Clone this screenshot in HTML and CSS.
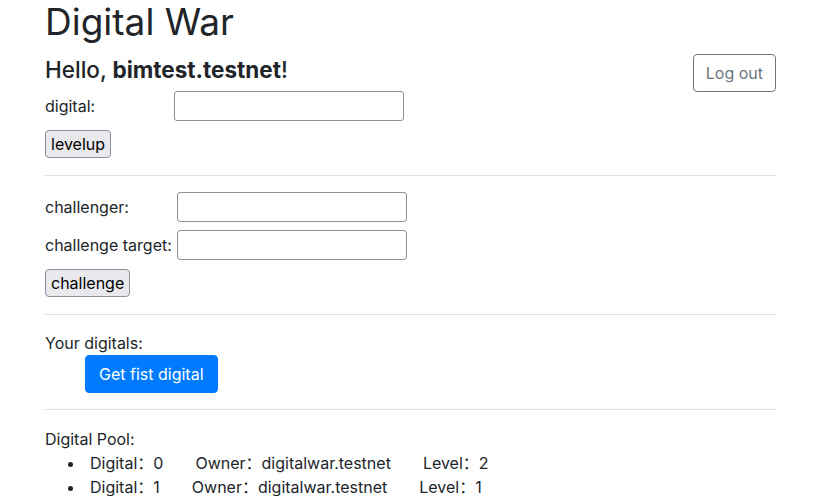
FILE: index.html
```html
<!DOCTYPE html>
<html lang="en">
<head>
<meta charset="utf-8">
<title>Digital War</title>
<link rel="stylesheet" href="styles.css">
</head>
<body>
<main class="container">
  <h1 class="title">Digital War</h1>
  <div class="hello-row">
    <h5 class="hello">Hello, <strong>bimtest.testnet</strong>!</h5>
    <button class="btn-logout" type="button">Log out</button>
  </div>

  <form class="form">
    <div class="field">
      <label class="label label-digital" for="digital">digital:</label>
      <input class="input" id="digital" type="text">
    </div>
    <button class="btn-plain" type="button">levelup</button>
  </form>

  <hr class="divider">

  <form class="form form-gap">
    <div class="field">
      <label class="label label-challenge" for="challenger">challenger:</label>
      <input class="input" id="challenger" type="text">
    </div>
    <div class="field">
      <label class="label label-challenge" for="target">challenge target:</label>
      <input class="input" id="target" type="text">
    </div>
    <button class="btn-plain" type="button">challenge</button>
  </form>

  <hr class="divider">

  <p class="section-title">Your digitals:</p>
  <ul class="plain-list">
    <li><button class="btn-primary" type="button">Get fist digital</button></li>
  </ul>

  <hr class="divider divider-tight">

  <p class="section-title">Digital Pool:</p>
  <ul class="pool">
    <li><span class="cell first">Digital：0</span><span class="cell">Owner：digitalwar.testnet</span><span class="cell">Level：2</span></li>
    <li><span class="cell first">Digital：1</span><span class="cell">Owner：digitalwar.testnet</span><span class="cell">Level：1</span></li>
  </ul>
</main>
</body>
</html>
```

FILE: styles.css
```css
html, body {
  margin: 0;
  padding: 0;
  background: #ffffff;
}

body {
  font-family: Inter, "Noto Sans CJK SC", sans-serif;
  font-size: 16px;
  line-height: 24px;
  color: #212529;
}

.container {
  margin: 0 48px 0 45px;
}

.title {
  margin: 0 0 -2px;
  font-size: 37px;
  line-height: 44px;
  font-weight: 400;
}

.hello-row {
  display: flex;
  justify-content: space-between;
  align-items: flex-start;
}

.hello {
  margin: 14px 0 8px;
  font-size: 22.5px;
  line-height: 27px;
  font-weight: 500;
}

.hello strong {
  font-weight: 700;
}

.btn-logout {
  margin-top: 12px;
  margin-bottom: -1px;
  height: 38px;
  padding: 0 12px;
  font-family: inherit;
  font-size: 16px;
  color: #6c757d;
  background: #ffffff;
  border: 1px solid #6c757d;
  border-radius: 4px;
}

.form {
  margin: 0;
  display: flex;
  flex-direction: column;
  align-items: flex-start;
}

.form-gap {
  gap: 8px;
}

.field {
  display: flex;
  align-items: center;
}

.label-digital {
  width: 129px;
}

.label-challenge {
  width: 132px;
}

.input {
  box-sizing: border-box;
  width: 230px;
  height: 30px;
  margin: 0;
  border: 1px solid #8f8f9d;
  border-radius: 3px;
  background: #ffffff;
  font-family: inherit;
  font-size: 16px;
}

.btn-plain {
  margin-top: 9px;
  height: 28px;
  padding: 0 5px;
  font-family: inherit;
  font-size: 16px;
  color: #000000;
  background: #e9e9ed;
  border: 1px solid #8f8f9d;
  border-radius: 4px;
}

.form-gap .btn-plain {
  margin-top: 1px;
}

.divider {
  margin: 17px 0 16px;
  border: 0;
  border-top: 1px solid #dfdfdf;
  height: 0;
}

.divider-tight {
  margin-top: 16px;
  margin-bottom: 17px;
}

.section-title {
  margin: 0;
}

.plain-list {
  margin: 0;
  padding-left: 40px;
  list-style: none;
}

.btn-primary {
  display: block;
  height: 38px;
  padding: 0 13px;
  font-family: inherit;
  font-size: 16px;
  color: #ffffff;
  background: #007bff;
  border: 1px solid #007bff;
  border-radius: 4px;
}

.pool {
  margin: 0;
  padding-left: 40px;
}

.cell {
  margin-left: 32px;
}

.cell.first {
  margin-left: 0;
  padding-left: 5px;
}
```
